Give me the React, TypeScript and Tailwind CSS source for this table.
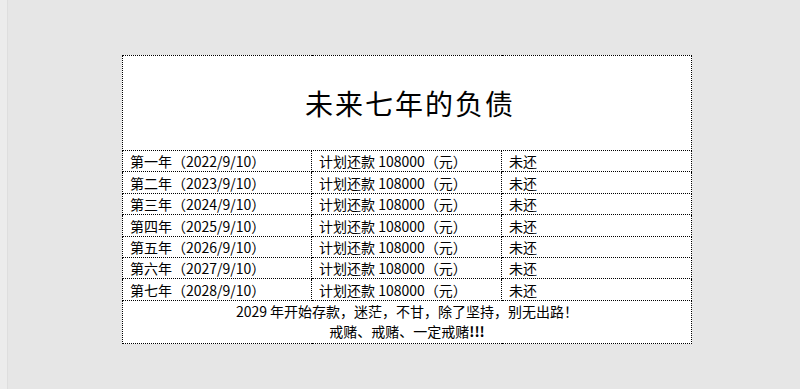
const rows = [
  ['第一年（2022/9/10）'],
  ['第二年（2023/9/10）'],
  ['第三年（2024/9/10）'],
  ['第四年（2025/9/10）'],
  ['第五年（2026/9/10）'],
  ['第六年（2027/9/10）'],
  ['第七年（2028/9/10）'],
]

const rowHeights = ['h-[21px]', 'h-[22px]', 'h-[21px]', 'h-[22px]', 'h-[21px]', 'h-[21px]', 'h-[22px]']

const cell = 'border border-dotted border-black px-[7px] py-0 leading-none align-middle'

export default function App() {
  return (
    <div className="w-[800px] h-[389px] bg-[#e6e6e6] flex overflow-hidden font-['Noto_Sans_CJK_SC',sans-serif] text-black">
      {/* left gutter */}
      <div className="w-[8px] h-full bg-[#ececec] border-r border-[#dedede]" />

      <div className="ml-[114px] mt-[55px]">
        <table className="w-[569px] border-collapse bg-white table-fixed text-[14px]">
          <colgroup>
            <col className="w-[189px]" />
            <col className="w-[190px]" />
            <col className="w-[190px]" />
          </colgroup>
          <tbody>
            <tr>
              <td colSpan={3} className="border border-dotted border-black h-[95px] text-center align-middle p-0 pl-[6px]">
                <span className="text-[28px] font-normal tracking-[2px] font-['Noto_Sans_CJK_SC',serif]">
                  未来七年的负债
                </span>
              </td>
            </tr>
            {rows.map((r, i) => (
              <tr key={i} className={rowHeights[i]}>
                <td className={cell}>{r[0]}</td>
                <td className={cell}>计划还款 108000（元）</td>
                <td className={cell}>未还</td>
              </tr>
            ))}
            <tr>
              <td colSpan={3} className="border border-dotted border-black h-[43px] text-center align-middle p-0 pb-[2px] leading-[20px]">
                <div>2029 年开始存款，迷茫，不甘，除了坚持，别无出路！</div>
                <div>
                  戒赌、戒赌、一定戒赌<span className="font-bold">!!!</span>
                </div>
              </td>
            </tr>
          </tbody>
        </table>
      </div>
    </div>
  )
}
